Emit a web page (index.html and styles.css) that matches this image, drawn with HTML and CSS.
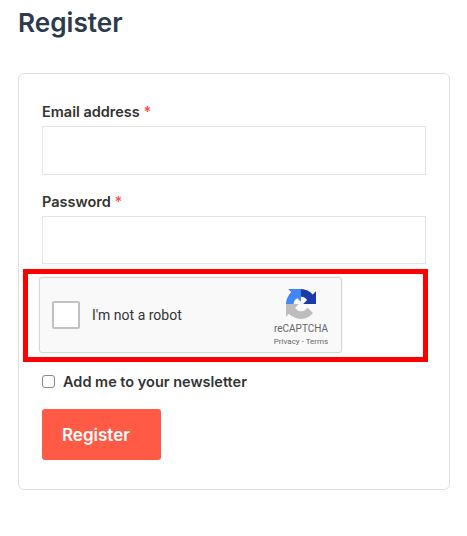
FILE: index.html
```html
<!DOCTYPE html>
<html lang="en">
<head>
    <meta charset="UTF-8">
    <meta name="viewport" content="width=device-width, initial-scale=1.0">
    <title>Register</title>
    <link rel="stylesheet" href="styles.css">
</head>
<body>
    <h1 class="page-title">Register</h1>
    <form class="register-card">
        <div class="field">
            <label class="field-label" for="email">Email address <span class="required">*</span></label>
            <input class="field-input" type="email" id="email">
        </div>
        <div class="field">
            <label class="field-label" for="password">Password <span class="required">*</span></label>
            <input class="field-input field-input-short" type="password" id="password">
        </div>
        <div class="highlight-box">
            <div class="captcha">
                <span class="captcha-check"></span>
                <span class="captcha-text">I'm not a robot</span>
                <div class="captcha-brand">
                    <svg class="captcha-logo" viewBox="0 0 64 64" width="30" height="30">
                        <path fill="#1c3aa9" d="M64 31.955l-.033-1.37V4.687l-7.16 7.16C50.948 4.674 42.033.093 32.05.093c-10.4 0-19.622 4.96-25.458 12.64l11.736 11.86a15.55 15.55 0 0 1 4.754-5.334c2.05-1.6 4.952-2.906 8.968-2.906.485 0 .86.057 1.135.163 4.976.393 9.288 3.14 11.828 7.124l-8.307 8.307c10.522-.04 22.4-.066 28.29.005"/>
                        <path fill="#4285f4" d="M31.862.094l-1.37.033H4.594l7.16 7.16C4.58 13.147 0 22.06 0 32.046c0 10.4 4.96 19.622 12.64 25.458l11.86-11.736a15.55 15.55 0 0 1-5.334-4.754c-1.6-2.05-2.906-4.952-2.906-8.968 0-.485.057-.86.163-1.135.393-4.976 3.14-9.288 7.124-11.828l8.307 8.307c-.04-10.522-.066-22.4.005-28.29"/>
                        <path fill="#bdbdbd" d="M.001 31.955l.033 1.37v25.9l7.16-7.16c5.86 7.173 14.774 11.753 24.76 11.753 10.4 0 19.622-4.96 25.458-12.64l-11.736-11.86a15.55 15.55 0 0 1-4.754 5.334c-2.05 1.6-4.952 2.906-8.968 2.906-.485 0-.86-.057-1.135-.163-4.976-.393-9.288-3.14-11.828-7.124l8.307-8.307c-10.522.04-22.4.066-28.29-.005"/>
                    </svg>
                    <span class="captcha-name">reCAPTCHA</span>
                    <span class="captcha-links">Privacy - Terms</span>
                </div>
            </div>
        </div>
        <label class="newsletter">
            <input class="newsletter-check" type="checkbox">
            <span>Add me to your newsletter</span>
        </label>
        <button class="submit-btn" type="button">Register</button>
    </form>
</body>
</html>
```

FILE: styles.css
```css
* {
    box-sizing: border-box;
}

body {
    margin: 0;
    padding: 0 17px 0 18px;
    background-color: #fff;
    font-family: Inter, "Liberation Sans", sans-serif;
    color: #333;
}

.page-title {
    margin: 0 0 34px;
    padding-top: 7px;
    font-size: 26.2px;
    line-height: 32px;
    font-weight: 600;
    color: #2c3a4f;
}

.register-card {
    height: 417px;
    padding: 28px 23px 0;
    border: 1px solid #e0e0e0;
    border-radius: 6px;
}

.field {
    margin-bottom: 17px;
}

.field-label {
    display: block;
    margin-bottom: 4px;
    font-size: 14.5px;
    line-height: 20px;
    font-weight: 600;
    color: #333;
}

.required {
    color: #ff4d4d;
}

.field-input {
    display: block;
    width: 100%;
    height: 49px;
    border: 1px solid #e4e4e4;
    background-color: #fff;
}

.field-input-short {
    height: 48px;
}

.highlight-box {
    width: 405px;
    height: 93px;
    margin: -12px 0 0 -19px;
    padding: 3px 0 0 11px;
    border: 5px solid #f00;
}

.captcha {
    display: flex;
    align-items: center;
    width: 303px;
    height: 76px;
    padding-left: 12px;
    border: 1px solid #d6d6d6;
    border-radius: 3px;
    background-color: #f9f9f9;
    box-shadow: 0 0 3px rgba(0, 0, 0, 0.08);
    font-family: Roboto, sans-serif;
}

.captcha-check {
    width: 28px;
    height: 28px;
    border: 2px solid #c1c1c1;
    border-radius: 2px;
    background-color: #fff;
}

.captcha-text {
    margin-left: 12px;
    font-size: 14px;
    color: #333;
}

.captcha-brand {
    display: flex;
    flex-direction: column;
    align-items: center;
    align-self: flex-start;
    width: 60px;
    margin-left: auto;
    margin-right: 10px;
    padding-top: 11px;
    color: #666;
}

.captcha-logo {
    margin-bottom: 3px;
}

.captcha-name {
    font-size: 10px;
    line-height: 13px;
}

.captcha-links {
    margin-top: 1px;
    font-size: 8px;
    line-height: 11px;
    white-space: nowrap;
}

.newsletter {
    display: flex;
    align-items: center;
    margin-top: 10px;
    font-size: 14.5px;
    line-height: 20px;
    font-weight: 600;
    color: #333;
}

.newsletter-check {
    appearance: none;
    width: 13px;
    height: 13px;
    margin: 0 8px 2px 0;
    border: 1.5px solid #8a8a8a;
    border-radius: 3px;
    background-color: #fff;
}

.submit-btn {
    display: block;
    width: 119px;
    height: 51px;
    margin-top: 17px;
    padding: 0 0 0 20px;
    border: none;
    border-radius: 3px;
    background-color: #ff5a45;
    color: #fff;
    font-family: inherit;
    font-size: 17px;
    font-weight: 600;
    text-align: left;
}
```
